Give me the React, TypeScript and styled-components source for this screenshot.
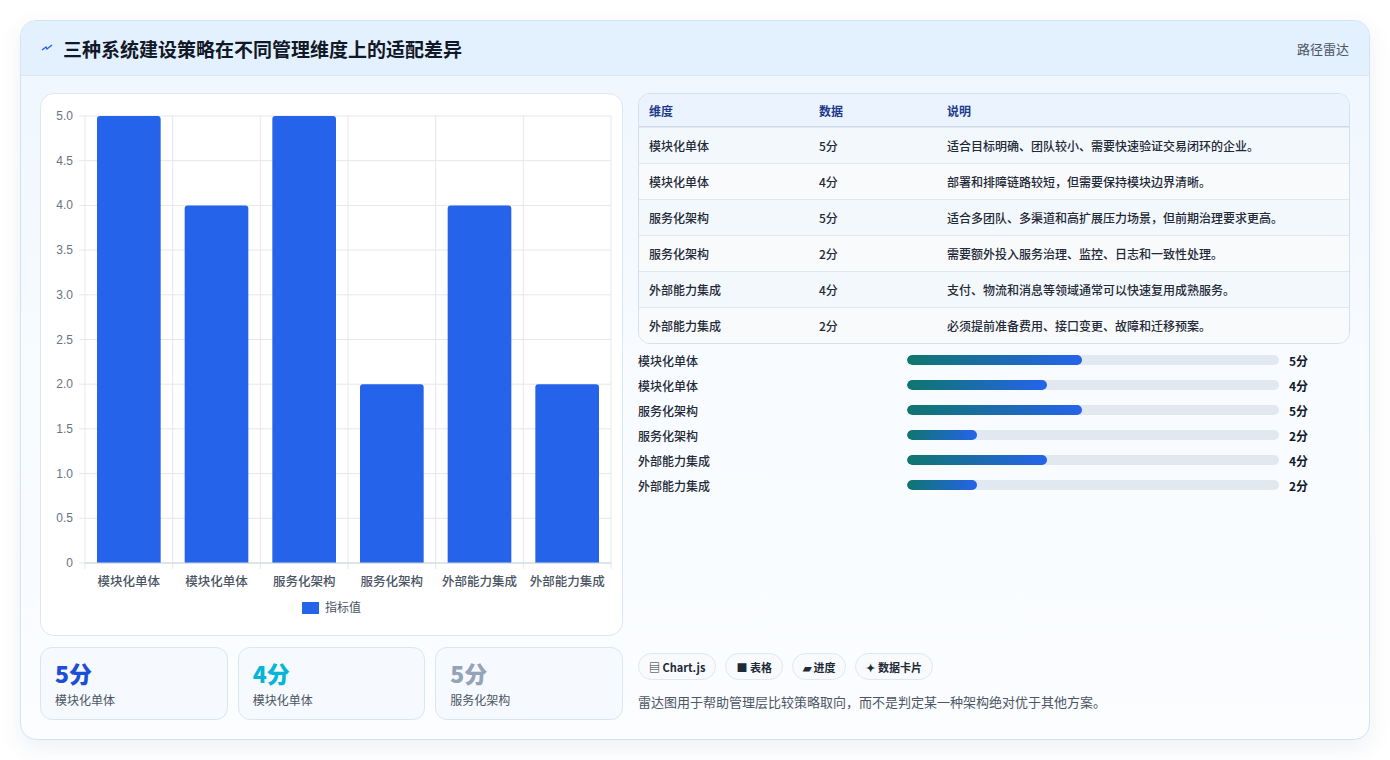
import React from "react";
import styled, { createGlobalStyle } from "styled-components";

const Global = createGlobalStyle`
  html, body { margin: 0; padding: 0; background: #fff; }
  body { font-family: "Noto Sans CJK SC", "Noto Sans", sans-serif; width: 1390px; height: 760px; overflow: hidden; }
`;

const Page = styled.div`padding: 20px 20px 0 20px;`;
const Card = styled.div`
  width: 1350px; height: 720px; box-sizing: border-box;
  border: 1px solid #cfe4f5; border-radius: 16px; overflow: hidden;
  background: linear-gradient(180deg, #eef6fe 0%, #f8fbff 50%, #fbfdff 100%);
  box-shadow: 0 8px 24px rgba(30,60,120,0.08);
  display: flex; flex-direction: column;
`;
const Header = styled.div`
  height: 55px; box-sizing: border-box; padding: 0 20px;
  display: flex; align-items: center; justify-content: space-between;
  background: #e3f0fd; border-bottom: 1px solid #d6e7f7;
`;
const Title = styled.h1`
  margin: 0; font-size: 19px; font-weight: 700; color: #111827;
  display: flex; align-items: center; gap: 10px;
`;
const Tag = styled.span`font-size: 13px; color: #4b5563;`;
const Body = styled.div`
  flex: 1; padding: 17px 19px 19px 19px; display: grid;
  grid-template-columns: 583px 1fr; gap: 15px;
`;
const LeftCol = styled.div`display: flex; flex-direction: column; gap: 11px;`;
const ChartCard = styled.div`
  height: 543px; box-sizing: border-box; background: #fff;
  border: 1px solid #dde7f2; border-radius: 14px; overflow: hidden;
`;
const Stats = styled.div`display: grid; grid-template-columns: repeat(3, 1fr); gap: 10px;`;
const Stat = styled.div`
  height: 73px; box-sizing: border-box; border: 1px solid #d9e6f3; border-radius: 12px;
  background: #f6f9fd; padding: 10px 14px;
`;
const StatVal = styled.div<{ $c: string }>`font-size: 23px; font-weight: 800; color: ${p => p.$c}; line-height: 30px;`;
const StatLbl = styled.div`font-size: 12px; color: #4b5563; margin-top: 3px;`;
const RightCol = styled.div`display: flex; flex-direction: column;`;
const Table = styled.div`
  border: 1px solid #d3e0ee; border-radius: 12px; overflow: hidden; background: #f7fafd;
`;
const Row = styled.div<{ $head?: boolean; $alt?: boolean }>`
  display: grid; grid-template-columns: 170px 128px 1fr; align-items: center;
  height: ${p => (p.$head ? 32 : 35)}px; padding: 0 10px; font-size: 12px;
  color: ${p => (p.$head ? "#1e3a8a" : "#1f2937")};
  font-weight: ${p => (p.$head ? 600 : 500)};
  background: ${p => (p.$head ? "#eaf3fe" : p.$alt ? "#f8fafc" : "#f3f8fc")};
  border-top: ${p => (p.$head ? "none" : "1px solid #dfe7f0")};
  ${p => p.$head && "border-bottom: 1px solid #cfdbe8;"}
`;
const Bars = styled.div`margin-top: 7px; display: flex; flex-direction: column; gap: 7px;`;
const BarRow = styled.div`
  display: grid; grid-template-columns: 269px 372px 1fr; align-items: center; gap: 0;
  height: 18px; font-size: 12px; color: #1f2937; font-weight: 500;
`;
const Track = styled.div`height: 10px; border-radius: 5px; background: #e2e8f0; overflow: hidden;`;
const Fill = styled.div`height: 100%; border-radius: 5px; background: linear-gradient(90deg, #0f766e, #2563eb);`;
const BarVal = styled.span`padding-left: 10px; font-weight: 700; color: #111827;`;
const Spacer = styled.div`flex: 1;`;
const Chips = styled.div`display: flex; gap: 9px;`;
const Chip = styled.span`
  height: 27px; box-sizing: border-box; padding: 0 10px; border: 1px solid #e1e7ef; border-radius: 14px;
  background: #f8fafc; font-size: 11px; font-weight: 600; color: #1f2937;
  display: inline-flex; align-items: center; gap: 4px;
`;
const Note = styled.p`margin: 12px 0 9px; font-size: 13px; color: #4b5563;`;

const cats = ["模块化单体", "模块化单体", "服务化架构", "服务化架构", "外部能力集成", "外部能力集成"];
const vals = [5, 4, 5, 2, 4, 2];
const notes = [
  "适合目标明确、团队较小、需要快速验证交易闭环的企业。",
  "部署和排障链路较短，但需要保持模块边界清晰。",
  "适合多团队、多渠道和高扩展压力场景，但前期治理要求更高。",
  "需要额外投入服务治理、监控、日志和一致性处理。",
  "支付、物流和消息等领域通常可以快速复用成熟服务。",
  "必须提前准备费用、接口变更、故障和迁移预案。",
];

function Chart() {
  const L = 44, R = 570, T = 22, B = 469;
  const cw = (R - L) / 6;
  const y = (v: number) => B - (v / 5) * (B - T);
  const ticks = [0, 0.5, 1, 1.5, 2, 2.5, 3, 3.5, 4, 4.5, 5];
  return (
    <svg width="581" height="541" style={{ display: "block" }}>
      {ticks.map(t => (
        <g key={t}>
          <line x1={L - 6} x2={R} y1={y(t)} y2={y(t)} stroke="#e5e7eb" />
          <text x={L - 12} y={y(t) + 4} textAnchor="end" fontSize="12" fill="#6b7280" fontFamily="Liberation Sans, sans-serif">{t === 0 ? "0" : t.toFixed(1)}</text>
        </g>
      ))}
      {Array.from({ length: 7 }).map((_, i) => (
        <line key={i} x1={L + i * cw} x2={L + i * cw} y1={T} y2={B + 6} stroke="#e5e7eb" />
      ))}
      {vals.map((v, i) => (
        <path key={i} d={`M${L + i * cw + 12},${B} V${y(v) + 3} a3,3 0 0 1 3,-3 H${L + i * cw + cw - 15} a3,3 0 0 1 3,3 V${B} Z`} fill="#2563eb" />
      ))}
      <line x1={L} x2={R} y1={B} y2={B} stroke="#cbd5e1" />
      {cats.map((c, i) => (
        <text key={i} x={L + i * cw + cw / 2} y={B + 23} textAnchor="middle" fontSize="12.5" fontWeight="500" fill="#4b5563">{c}</text>
      ))}
      <rect x={261} y={508} width={17} height={12} fill="#2563eb" />
      <text x={284} y={518} fontSize="12" fill="#4b5563">指标值</text>
    </svg>
  );
}

export default function App() {
  return (
    <>
      <Global />
      <Page>
        <Card>
          <Header>
            <Title>
              <svg width="12" height="12" viewBox="0 0 12 12"><path d="M1 8 L5 5 L6 7 L11 3" stroke="#2563eb" strokeWidth="1.4" fill="none" /></svg>
              三种系统建设策略在不同管理维度上的适配差异
            </Title>
            <Tag>路径雷达</Tag>
          </Header>
          <Body>
            <LeftCol>
              <ChartCard><Chart /></ChartCard>
              <Stats>
                <Stat><StatVal $c="#1d4ed8">5分</StatVal><StatLbl>模块化单体</StatLbl></Stat>
                <Stat><StatVal $c="#06b6d4">4分</StatVal><StatLbl>模块化单体</StatLbl></Stat>
                <Stat><StatVal $c="#94a3b8">5分</StatVal><StatLbl>服务化架构</StatLbl></Stat>
              </Stats>
            </LeftCol>
            <RightCol>
              <Table>
                <Row $head><span>维度</span><span>数据</span><span>说明</span></Row>
                {cats.map((c, i) => (
                  <Row key={i} $alt={i % 2 === 1}><span>{c}</span><span>{vals[i]}分</span><span>{notes[i]}</span></Row>
                ))}
              </Table>
              <Bars>
                {cats.map((c, i) => (
                  <BarRow key={i}>
                    <span>{c}</span>
                    <Track><Fill style={{ width: `${vals[i] * 9.4}%` }} /></Track>
                    <BarVal>{vals[i]}分</BarVal>
                  </BarRow>
                ))}
              </Bars>
              <Spacer />
              <Chips>
                <Chip>▤ Chart.js</Chip>
                <Chip>■ 表格</Chip>
                <Chip>▰ 进度</Chip>
                <Chip>✦ 数据卡片</Chip>
              </Chips>
              <Note>雷达图用于帮助管理层比较策略取向，而不是判定某一种架构绝对优于其他方案。</Note>
            </RightCol>
          </Body>
        </Card>
      </Page>
    </>
  );
}
